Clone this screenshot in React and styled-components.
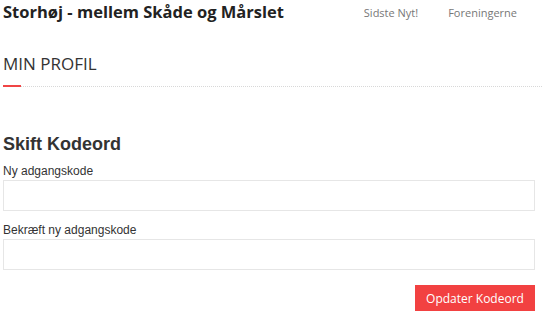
import React from 'react';
import styled, { createGlobalStyle } from 'styled-components';

const GlobalStyle = createGlobalStyle`
  html, body { margin: 0; padding: 0; background: #fff; }
  body { font-family: "Open Sans", Arial, sans-serif; }
  * { box-sizing: border-box; }
`;

const Page = styled.div`
  width: 542px;
  padding-left: 3px;
`;

const Header = styled.header`
  display: flex;
  justify-content: space-between;
  align-items: flex-start;
  height: 23px;
`;

const SiteTitle = styled.h1`
  margin: 0;
  font-family: "Open Sans", sans-serif;
  font-size: 16.5px;
  font-weight: 700;
  line-height: 23px;
  color: #222;
  white-space: nowrap;
`;

const Nav = styled.nav`
  display: flex;
  margin-top: 3px;
  margin-right: 8px;
`;

const NavLink = styled.a`
  padding: 0 0 0 30px;
  font-family: "Open Sans", sans-serif;
  font-size: 11px;
  line-height: 20px;
  color: #777;
  text-decoration: none;
  &:last-child { padding-right: 17px; }
`;

const PageTitle = styled.h2`
  position: relative;
  margin: 29px 0 0;
  padding-bottom: 10px;
  font-family: "Open Sans", sans-serif;
  font-size: 17px;
  font-weight: 400;
  line-height: 24px;
  color: #333;
  border-bottom: 1px dotted #d8d8d8;
  &::after {
    content: '';
    position: absolute;
    left: 0;
    bottom: -1px;
    width: 18px;
    height: 2px;
    background: #f04545;
  }
`;

const Form = styled.form`
  display: flex;
  flex-direction: column;
  padding-right: 7px;
  margin-top: 46px;
`;

const FormHeading = styled.h3`
  margin: 0 0 8px;
  font-family: Arial, "Liberation Sans", sans-serif;
  font-size: 18px;
  font-weight: 700;
  line-height: 22px;
  color: #333;
`;

const Field = styled.div`
  display: flex;
  flex-direction: column;
  margin-bottom: ${({ $last }) => ($last ? '15px' : '11px')};
`;

const Label = styled.label`
  margin-bottom: 1px;
  font-family: Arial, "Liberation Sans", sans-serif;
  font-size: 12px;
  line-height: 16px;
  color: #333;
`;

const Input = styled.input`
  height: 31px;
  padding: 0 8px;
  border: 1px solid #e6e6e6;
  border-radius: 0;
  background: #fff;
  font-family: Arial, "Liberation Sans", sans-serif;
  font-size: 12px;
  outline: none;
`;

const Actions = styled.div`
  display: flex;
  justify-content: flex-end;
`;

const SubmitButton = styled.button`
  width: 120px;
  height: 26px;
  padding: 0;
  border: none;
  border-radius: 0;
  background: #f24141;
  color: #fff;
  font-family: "Open Sans", sans-serif;
  font-size: 12px;
  cursor: pointer;
`;

export default function App() {
  return (
    <>
      <GlobalStyle />
      <Page>
        <Header>
          <SiteTitle>Storhøj - mellem Skåde og Mårslet</SiteTitle>
          <Nav>
            <NavLink href="#">Sidste Nyt!</NavLink>
            <NavLink href="#">Foreningerne</NavLink>
          </Nav>
        </Header>
        <PageTitle>MIN PROFIL</PageTitle>
        <Form onSubmit={(e) => e.preventDefault()}>
          <FormHeading>Skift Kodeord</FormHeading>
          <Field>
            <Label htmlFor="pw1">Ny adgangskode</Label>
            <Input id="pw1" type="password" />
          </Field>
          <Field $last>
            <Label htmlFor="pw2">Bekræft ny adgangskode</Label>
            <Input id="pw2" type="password" />
          </Field>
          <Actions>
            <SubmitButton type="submit">Opdater Kodeord</SubmitButton>
          </Actions>
        </Form>
      </Page>
    </>
  );
}
